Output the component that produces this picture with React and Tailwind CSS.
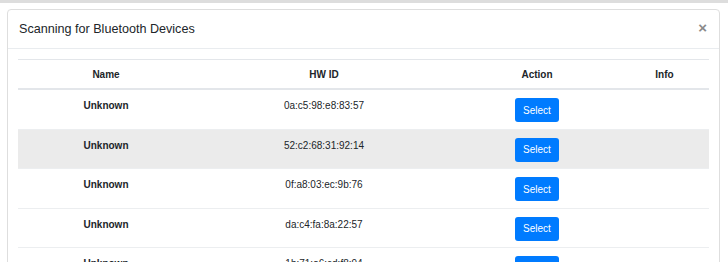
export default function App() {
  const rows = [
    { name: "Unknown", id: "0a:c5:98:e8:83:57" },
    { name: "Unknown", id: "52:c2:68:31:92:14", striped: true },
    { name: "Unknown", id: "0f:a8:03:ec:9b:76" },
    { name: "Unknown", id: "da:c4:fa:8a:22:57" },
    { name: "Unknown", id: "1b:71:a6:cd:f8:94" },
  ];
  return (
    <div className="w-[728px] h-[262px] overflow-hidden bg-white font-['Liberation_Sans',Arial,sans-serif] text-[#212529]">
      <div className="h-[3px] bg-[#dddddd]" />
      <div className="pt-[6px] px-[7px]">
        <div className="w-[713px] h-[260px] border border-[#dedede] rounded-[4px] bg-white">
          <div className="flex items-start justify-between px-[11px] pt-[10px] h-[39px] border-b border-[#e9ecef]">
            <div className="text-[12.6px] leading-[19px]">Scanning for Bluetooth Devices</div>
            <div className="text-[15px] leading-[15px] font-bold text-[#8a8a8a] mt-0 mr-[1px]">×</div>
          </div>
          <div className="px-[10px] pt-[10px]">
            <div className="w-[691px] text-[10px] leading-[15px]">
              <div className="flex border-t border-b-2 border-[#e3e6ea] h-[31px] font-bold items-start pt-[7px]">
                <div className="w-[176px] text-center">Name</div>
                <div className="w-[260px] text-center">HW ID</div>
                <div className="w-[166px] text-center">Action</div>
                <div className="w-[89px] text-center">Info</div>
              </div>
              {rows.map((r, i) => (
                <div
                  key={i}
                  className={
                    "flex items-start h-[39.5px] border-b border-[#eceef0] pt-[8px] " +
                    (r.striped ? "bg-[#ebebeb]" : "bg-white")
                  }
                >
                  <div className="w-[176px] text-center font-bold">{r.name}</div>
                  <div className="w-[260px] text-center">{r.id}</div>
                  <div className="w-[166px] flex justify-center">
                    <button className="h-[24px] w-[44px] rounded-[3px] bg-[#007bff] text-white text-[10px] leading-[15px]">
                      Select
                    </button>
                  </div>
                  <div className="w-[89px]" />
                </div>
              ))}
            </div>
          </div>
        </div>
      </div>
    </div>
  );
}
